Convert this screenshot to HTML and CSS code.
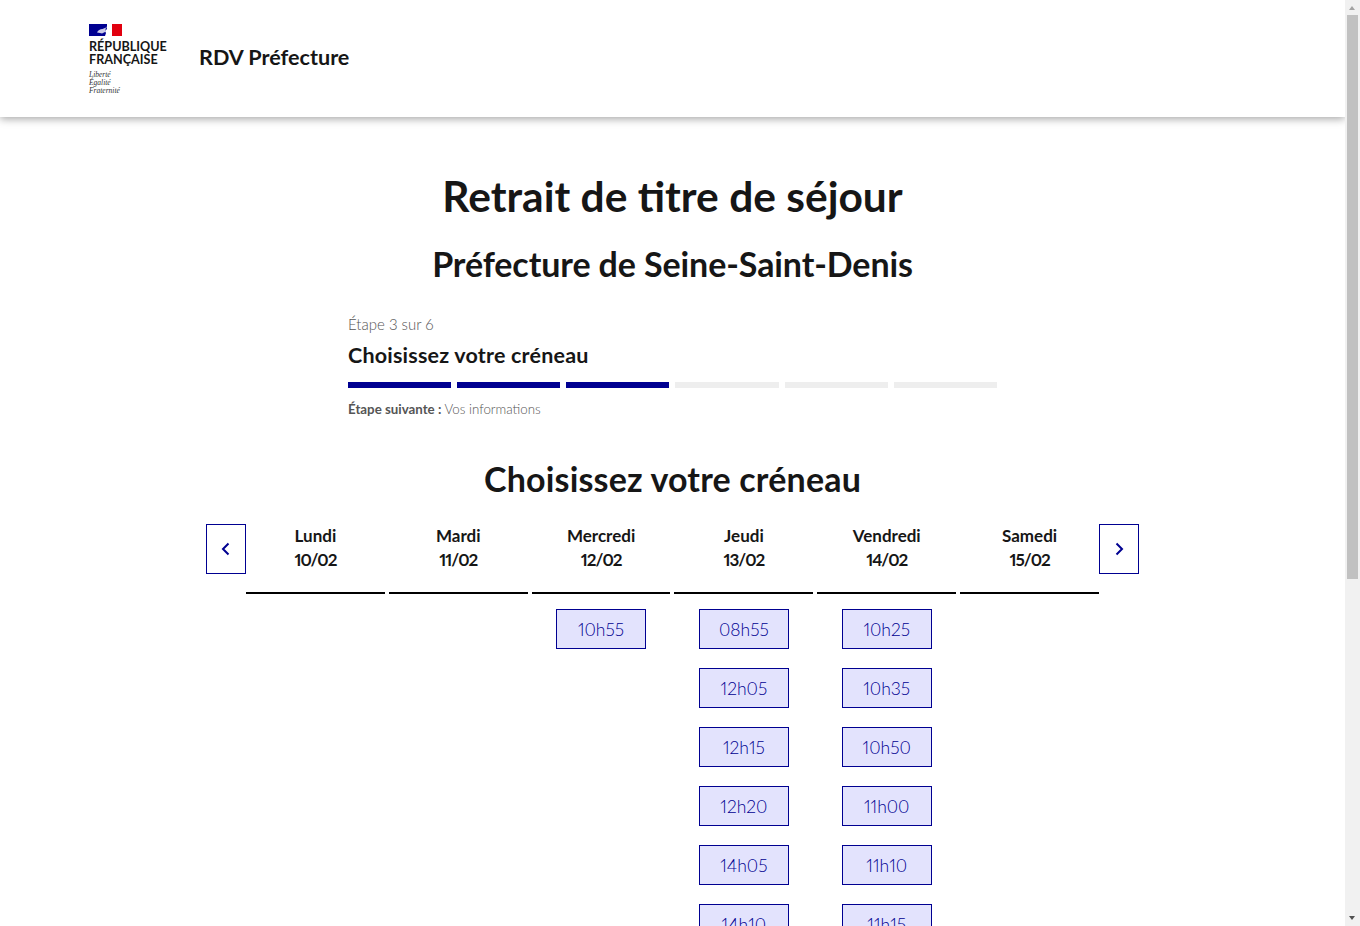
FILE: index.html
```html
<!DOCTYPE html>
<html lang="fr">

<head>
    <meta charset="UTF-8">
    <meta name="viewport" content="width=device-width, initial-scale=1.0">
    <title>RDV Préfecture</title>
    <link rel="stylesheet" href="styles.css">
</head>

<body>
    <header class="site-header">
        <div class="logo">
            <svg class="logo-flag" width="33" height="12" viewBox="0 0 33 12">
                <rect width="33" height="12" fill="#fff"/>
                <rect width="18" height="12" fill="#000091"/>
                <rect x="23" width="10" height="12" fill="#e1000f"/>
                <path d="M8 8.500c1-2 3-3.500 5.500-3.500L17 3.500 16 8l-3 1.500-2-.5z" fill="#c9c9e8"/>
                <path d="M16 12l1-3-1-2 2-2-.5-2L20 0h3l-1 2 1 2.500-1 1.500 1 2-2 2 1 2z" fill="#fff"/>
            </svg>
            <p class="logo-name">RÉPUBLIQUE<br>FRANÇAISE</p>
            <p class="logo-motto">Liberté<br>Égalité<br>Fraternité</p>
        </div>
        <div class="site-name">RDV Préfecture</div>
    </header>

    <main class="content">
        <h1>Retrait de titre de séjour</h1>
        <h2 class="prefecture">Préfecture de Seine-Saint-Denis</h2>

        <div class="stepper">
            <p class="step-count">Étape 3 sur 6</p>
            <p class="step-title">Choisissez votre créneau</p>
            <div class="step-bars">
                <span class="step-bar done"></span>
                <span class="step-bar done"></span>
                <span class="step-bar done"></span>
                <span class="step-bar"></span>
                <span class="step-bar"></span>
                <span class="step-bar"></span>
            </div>
            <p class="step-next"><b>Étape suivante :</b> Vos informations</p>
        </div>

        <h2 class="slots-title">Choisissez votre créneau</h2>

        <div class="calendar">
            <button class="arrow" aria-label="Précédent">
                <svg width="16" height="16" viewBox="0 0 16 16"><path d="M10.500 2.500 5 8l5.500 5.500" fill="none" stroke="#000091" stroke-width="2"/></svg>
            </button>
            <div class="days">
                <div class="day">
                    <div class="day-head">Lundi<br><span class="day-date">10/02</span></div>
                </div>
                <div class="day">
                    <div class="day-head">Mardi<br><span class="day-date">11/02</span></div>
                </div>
                <div class="day">
                    <div class="day-head">Mercredi<br><span class="day-date">12/02</span></div>
                    <button class="slot">10h55</button>
                </div>
                <div class="day">
                    <div class="day-head">Jeudi<br><span class="day-date">13/02</span></div>
                    <button class="slot">08h55</button>
                    <button class="slot">12h05</button>
                    <button class="slot">12h15</button>
                    <button class="slot">12h20</button>
                    <button class="slot">14h05</button>
                    <button class="slot">14h10</button>
                </div>
                <div class="day">
                    <div class="day-head">Vendredi<br><span class="day-date">14/02</span></div>
                    <button class="slot">10h25</button>
                    <button class="slot">10h35</button>
                    <button class="slot">10h50</button>
                    <button class="slot">11h00</button>
                    <button class="slot">11h10</button>
                    <button class="slot">11h15</button>
                </div>
                <div class="day">
                    <div class="day-head">Samedi<br><span class="day-date">15/02</span></div>
                </div>
            </div>
            <button class="arrow" aria-label="Suivant">
                <svg width="16" height="16" viewBox="0 0 16 16"><path d="M5.500 2.500 11 8l-5.500 5.500" fill="none" stroke="#000091" stroke-width="2"/></svg>
            </button>
        </div>
    </main>

    <div class="scrollbar">
        <span class="scroll-up"></span>
        <span class="scroll-thumb"></span>
        <span class="scroll-down"></span>
    </div>
</body>

</html>
```

FILE: styles.css
```css
* {
    margin: 0;
    padding: 0;
    box-sizing: border-box;
}

body {
    margin-right: 15px;
    background-color: white;
    color: #161616;
    font-family: "Lato", "Liberation Sans", sans-serif;
    font-variant-numeric: proportional-nums;
}

.site-header {
    height: 117px;
    display: flex;
    align-items: center;
    padding-left: 89px;
    background-color: white;
    box-shadow: 0 2px 8px rgba(0, 0, 0, 0.35);
}

.logo {
    width: 110px;
    padding-top: 2px;
}

.logo-flag {
    display: block;
}

.logo-name {
    margin-top: 4px;
    font-size: 12.6px;
    line-height: 13px;
    font-weight: 700;
}

.logo-motto {
    margin-top: 5px;
    font-family: "Liberation Serif", serif;
    font-size: 7.500px;
    line-height: 8px;
    font-style: italic;
    color: #333;
}

.site-name {
    margin-bottom: 4px;
    font-size: 21.6px;
    font-weight: 700;
}

.content {
    padding-top: 54px;
    padding-bottom: 60px;
}

h1 {
    font-size: 42.5px;
    line-height: 50px;
    font-weight: 700;
    text-align: center;
}

h2 {
    font-size: 34px;
    line-height: 40px;
    font-weight: 700;
    text-align: center;
}

.prefecture {
    margin-top: 23px;
    letter-spacing: -0.1px;
}

.stepper {
    width: 649px;
    margin: 28px auto 0;
}

.step-count {
    font-size: 15px;
    line-height: 24px;
    font-weight: 300;
    color: #555;
}

.step-title {
    margin-top: 5px;
    font-size: 21.5px;
    line-height: 28px;
    font-weight: 700;
    letter-spacing: 0.2px;
}

.step-bars {
    display: grid;
    grid-template-columns: repeat(6, 1fr);
    gap: 6px;
    margin-top: 13px;
}

.step-bar {
    height: 6px;
    background-color: #eee;
}

.step-bar.done {
    background-color: #000091;
}

.step-next {
    margin-top: 11px;
    font-size: 13.3px;
    line-height: 20px;
    font-weight: 300;
    color: #555;
}

.step-next b {
    font-weight: 700;
}

.slots-title {
    margin-top: 40px;
    letter-spacing: 0.17px;
}

.calendar {
    display: flex;
    align-items: flex-start;
    width: 933px;
    margin: 25px auto 0;
}

.arrow {
    flex: none;
    display: flex;
    align-items: center;
    justify-content: center;
    width: 40px;
    height: 50px;
    background-color: white;
    border: 1px solid #000091;
}

.days {
    flex: 1;
    display: grid;
    grid-template-columns: repeat(6, 1fr);
    column-gap: 4px;
}

.day {
    display: flex;
    flex-direction: column;
    align-items: center;
}

.day-head {
    width: 100%;
    height: 70px;
    border-bottom: 2px solid black;
    font-size: 17px;
    line-height: 24px;
    font-weight: 700;
    text-align: center;
}

.day-date {
    letter-spacing: -1px;
}

.slot {
    width: 90px;
    height: 40px;
    margin-top: 15px;
    margin-bottom: 4px;
    background-color: #e3e3fd;
    border: 1px solid #000091;
    color: #000091;
    font-family: inherit;
    font-variant-numeric: proportional-nums;
    font-size: 17.5px;
    font-weight: 300;
}

.scrollbar {
    position: fixed;
    top: 0;
    right: 0;
    width: 15px;
    height: 100%;
    background-color: #f1f1f1;
}

.scroll-thumb {
    position: absolute;
    top: 15px;
    left: 2px;
    width: 11px;
    height: 564px;
    background-color: #c1c1c1;
}

.scroll-up,
.scroll-down {
    position: absolute;
    left: 4px;
    border-left: 3.500px solid transparent;
    border-right: 3.500px solid transparent;
}

.scroll-up {
    top: 6px;
    border-bottom: 4px solid #a3a3a3;
}

.scroll-down {
    bottom: 6px;
    border-top: 4px solid #505050;
}
```
